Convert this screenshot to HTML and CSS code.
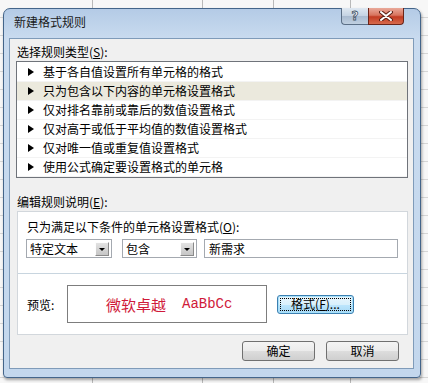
FILE: index.html
```html
<!DOCTYPE html>
<html lang="zh-CN">

<head>
    <meta charset="UTF-8">
    <meta name="viewport" content="width=device-width, initial-scale=1.0">
    <title>新建格式规则</title>
    <link rel="stylesheet" href="styles.css">
</head>

<body>
    <div class="window">
        <div class="titlebar">
            <div class="title">新建格式规则</div>
            <div class="caption-btns">
                <div class="cap-btn help">?</div>
                <div class="cap-btn close">
                    <svg viewBox="0 0 14 10" width="14" height="10">
                        <path d="M2 1 L12 9 M12 1 L2 9" stroke="#5a2015" stroke-width="4" stroke-linecap="round"></path>
                        <path d="M2 1 L12 9 M12 1 L2 9" stroke="#ffffff" stroke-width="2" stroke-linecap="round"></path>
                    </svg>
                </div>
            </div>
        </div>

        <div class="client">
            <div class="group-label">选择规则类型(<u>S</u>):</div>
            <ul class="rule-list">
                <li>基于各自值设置所有单元格的格式</li>
                <li class="selected">只为包含以下内容的单元格设置格式</li>
                <li>仅对排名靠前或靠后的数值设置格式</li>
                <li>仅对高于或低于平均值的数值设置格式</li>
                <li>仅对唯一值或重复值设置格式</li>
                <li>使用公式确定要设置格式的单元格</li>
            </ul>

            <div class="group-label second">编辑规则说明(<u>E</u>):</div>
            <div class="panel">
                <div class="panel-top">
                    <div class="cond-label">只为满足以下条件的单元格设置格式(<u>O</u>):</div>
                    <div class="cond-row">
                        <div class="combo combo-type">
                            <span class="combo-text">特定文本</span>
                            <span class="drop-btn"></span>
                        </div>
                        <div class="combo combo-op">
                            <span class="combo-text">包含</span>
                            <span class="drop-btn"></span>
                        </div>
                        <div class="textbox">新需求</div>
                    </div>
                </div>
                <div class="panel-bottom">
                    <div class="preview-label">预览:</div>
                    <div class="preview-box">
                        <span class="preview-cn">微软卓越</span>
                        <span class="preview-en">AaBbCc</span>
                    </div>
                    <div class="btn format-btn"><span class="focus-rect">格式(<u>F</u>)...</span></div>
                </div>
            </div>

            <div class="dialog-btns">
                <div class="btn">确定</div>
                <div class="btn">取消</div>
            </div>
        </div>
    </div>
</body>

</html>
```

FILE: styles.css
```css
body {
    margin: 0;
    width: 428px;
    height: 383px;
    box-sizing: border-box;
    padding: 8px 7px 5px 3px;
    font-family: "Noto Sans CJK SC", sans-serif;
    font-size: 12px;
    color: #000;
    overflow: hidden;
    /* excel grid behind the dialog */
    background:
        linear-gradient(#b9b9b9, #b9b9b9) 92px 0 / 1px 100% no-repeat,
        linear-gradient(#b9b9b9, #b9b9b9) 202px 0 / 1px 100% no-repeat,
        linear-gradient(#b9b9b9, #b9b9b9) 273px 0 / 1px 100% no-repeat,
        linear-gradient(#b9b9b9, #b9b9b9) 350px 0 / 1px 100% no-repeat,
        repeating-linear-gradient(to bottom, transparent 0 17px, #d6d6d6 17px 18px),
        #f7f7f7;
}

.window {
    width: 418px;
    height: 370px;
    box-sizing: border-box;
    border: 1px solid #44658a;
    border-radius: 7px 7px 4px 4px;
    background: linear-gradient(to bottom, #b4cbe6 0, #c9dbef 30px, #c3d7ed 100%);
    box-shadow: 1px 2px 3px rgba(0, 0, 0, 0.35);
    padding: 0 6px 8px 5px;
    display: flex;
    flex-direction: column;
}

.titlebar {
    height: 29px;
    display: flex;
    justify-content: space-between;
    align-items: flex-start;
}

.title {
    padding: 5px 0 0 5px;
    line-height: 16px;
    color: #1a1a1a;
}

.caption-btns {
    display: flex;
    margin: -1px 10px 0 0;
}

.cap-btn {
    height: 17px;
    box-sizing: border-box;
    border: 1px solid #5b6f86;
    border-top: none;
    display: flex;
    align-items: center;
    justify-content: center;
}

.help {
    width: 27px;
    border-radius: 0 0 0 4px;
    border-right: none;
    background: linear-gradient(to bottom, #dfe8f1, #c4d3e3 50%, #a9bbd0 51%, #c0d0e1);
    color: #fff;
    font-family: "DejaVu Sans", sans-serif;
    font-weight: bold;
    font-size: 12px;
    -webkit-text-stroke: 0.8px #3d4f63;
}

.close {
    width: 36px;
    border-radius: 0 0 4px 0;
    border-color: #6b2519;
    background: linear-gradient(to bottom, #e9a99a, #d8745e 45%, #c23b22 55%, #d76a4c);
}

.client {
    flex: 1;
    background: #f0f0f0;
    border: 1px solid #7f9bb9;
    padding: 5px 5px 0 6px;
    display: flex;
    flex-direction: column;
}

.group-label {
    line-height: 16px;
    padding-left: 1px;
}

.group-label.second {
    margin-top: 16px;
}

.rule-list {
    list-style: none;
    margin: 1px 0 0;
    padding: 1px 0 0;
    height: 117px;
    box-sizing: border-box;
    border: 1px solid #6f737a;
    background: #fff;
}

.rule-list li {
    height: 19px;
    box-sizing: border-box;
    line-height: 18px;
    padding-left: 11px;
    border-bottom: 1px solid #f3f3f3;
    display: flex;
    align-items: center;
}

.rule-list li::before {
    content: "";
    width: 0;
    height: 0;
    border-left: 6px solid #000;
    border-top: 4px solid transparent;
    border-bottom: 4px solid transparent;
    margin-right: 9px;
}

.rule-list li.selected {
    background: #ebe9dd;
}

.panel {
    margin: 1px 0 0 1px;
    height: 124px;
    box-sizing: border-box;
    border: 1px solid #d2d7dc;
    background: #fff;
    display: flex;
    flex-direction: column;
}

.panel-top {
    padding: 7px 9px 15px 8px;
    border-bottom: 1px solid #c8d5df;
}

.cond-label {
    line-height: 16px;
    padding-left: 1px;
}

.cond-row {
    display: flex;
    margin-top: 4px;
}

.combo {
    height: 19px;
    box-sizing: border-box;
    border: 1px solid #a4a9b0;
    display: flex;
    align-items: center;
    justify-content: space-between;
    padding: 0 2px 0 3px;
}

.combo-type {
    width: 86px;
}

.combo-op {
    width: 75px;
    margin-left: 10px;
}

.drop-btn {
    width: 14px;
    height: 14px;
    box-sizing: border-box;
    border: 1px solid;
    border-color: #fdfdfd #8a8a8a #8a8a8a #fdfdfd;
    background: linear-gradient(to bottom, #e2e2e2, #c6c6c6);
    display: flex;
    align-items: center;
    justify-content: center;
}

.drop-btn::after {
    content: "";
    border-top: 3px solid #000;
    border-left: 3px solid transparent;
    border-right: 3px solid transparent;
    margin-top: 1px;
}

.textbox {
    flex: 1;
    height: 19px;
    box-sizing: border-box;
    margin-left: 7px;
    border: 1px solid #a4a9b0;
    padding-left: 4px;
    line-height: 17px;
}

.panel-bottom {
    flex: 1;
    display: flex;
    align-items: center;
    padding: 0 9px 0 9px;
}

.preview-label {
    width: 40px;
}

.preview-box {
    width: 200px;
    height: 38px;
    box-sizing: border-box;
    border: 1px solid #7d7d7d;
    display: flex;
    align-items: center;
    padding-left: 38px;
    color: #d01a3a;
}

.preview-cn {
    font-size: 15px;
    letter-spacing: 0;
}

.preview-en {
    font-family: "Liberation Mono", monospace;
    font-size: 14px;
    margin-left: 16px;
}

.btn {
    height: 20px;
    box-sizing: border-box;
    border: 1px solid #707070;
    border-radius: 3px;
    background: linear-gradient(to bottom, #f4f4f4, #ebebeb 50%, #dddddd 51%, #cfcfcf);
    display: flex;
    align-items: center;
    justify-content: center;
    line-height: 16px;
}

.format-btn {
    width: 77px;
    height: 19px;
    margin-left: 10px;
    border-color: #3c7fb1;
    box-shadow: inset 0 0 0 1px #a7e0f9;
    background: linear-gradient(to bottom, #eaf6fd, #d9f0fc 50%, #bee6fd 51%, #a7d9f5);
    padding: 2px;
}

.focus-rect {
    flex: 1;
    align-self: stretch;
    display: flex;
    align-items: center;
    justify-content: center;
    outline: 1px dotted #000;
    outline-offset: -1px;
}

.dialog-btns {
    display: flex;
    justify-content: flex-end;
    gap: 11px;
    margin: 6px 9px 0 0;
}

.dialog-btns .btn {
    width: 73px;
}
```
